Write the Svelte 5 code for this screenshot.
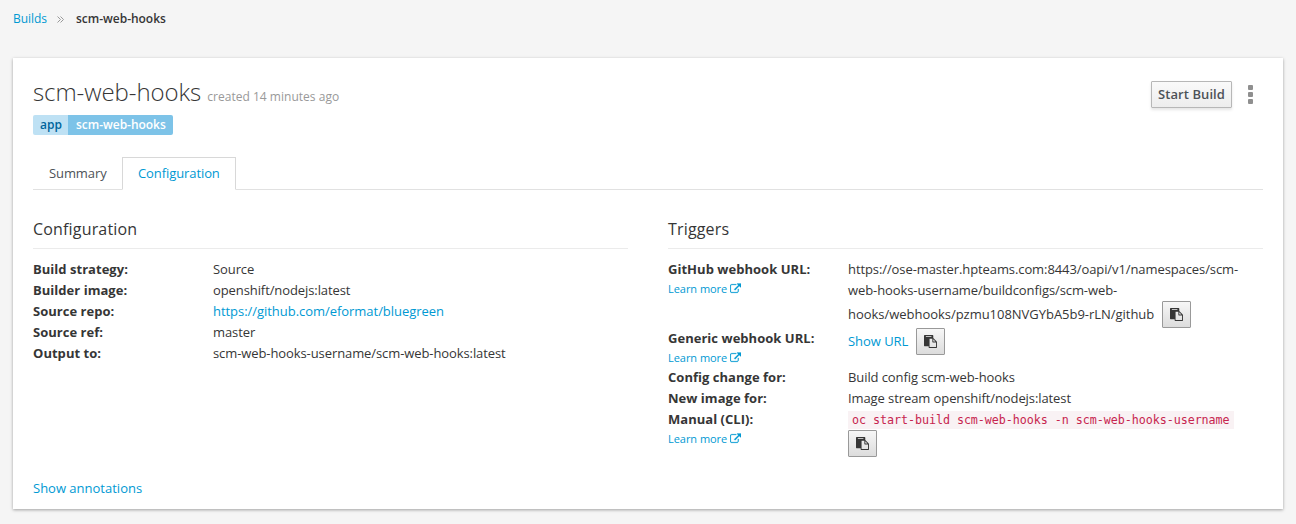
<script>
  const config = [
    ['Build strategy:', 'Source', false],
    ['Builder image:', 'openshift/nodejs:latest', false],
    ['Source repo:', 'https://github.com/eformat/bluegreen', true],
    ['Source ref:', 'master', false],
    ['Output to:', 'scm-web-hooks-username/scm-web-hooks:latest', false]
  ];
</script>

{#snippet learn()}
  <a class="learn" href="#top">Learn more
    <svg width="11" height="11" viewBox="0 0 1792 1664"><path fill="currentColor" stroke="currentColor" stroke-width="40" d="M1408 928v320q0 119-84.5 203.5t-203.5 84.5h-832q-119 0-203.5-84.5t-84.5-203.5v-832q0-119 84.5-203.5t203.5-84.5h704q14 0 23 9t9 23v64q0 14-9 23t-23 9h-704q-66 0-113 47t-47 113v832q0 66 47 113t113 47h832q66 0 113-47t47-113v-320q0-14 9-23t23-9h64q14 0 23 9t9 23zm384-864v512q0 26-19 45t-45 19-45-19l-176-176-652 652q-10 10-23 10t-23-10l-114-114q-10-10-10-23t10-23l652-652-176-176q-19-19-19-45t19-45 45-19h512q26 0 45 19t19 45z"/></svg>
  </a>
{/snippet}

{#snippet copy()}
  <button class="copy" aria-label="Copy">
    <svg width="13" height="13" viewBox="0 0 1792 1792"><path fill="currentColor" d="M768 1664h896v-640h-416q-40 0-68-28t-28-68v-416h-384v1152zm256-1440v-64q0-13-9.5-22.5t-22.5-9.5h-704q-13 0-22.5 9.5t-9.5 22.5v64q0 13 9.5 22.5t22.5 9.5h704q13 0 22.5-9.5t9.5-22.5zm256 672h299l-299-299v299zm512 128v672q0 40-28 68t-68 28h-960q-40 0-68-28t-28-68v-160h-544q-40 0-68-28t-28-68v-1344q0-40 28-68t68-28h1088q40 0 68 28t28 68v328q21 13 36 28l408 408q28 28 48 76t20 88z"/></svg>
  </button>
{/snippet}

<div class="page">
  <nav class="crumbs">
    <a href="#top">Builds</a>
    <svg width="7" height="7" viewBox="0 0 7 7" fill="none" stroke="#999"><path d="M.5.5l3 3-3 3M3.5.5l3 3-3 3"/></svg>
    <strong>scm-web-hooks</strong>
  </nav>
  <main class="card">
    <header>
      <h1>scm-web-hooks <small>created 14 minutes ago</small></h1>
      <div class="actions">
        <button class="start">Start Build</button>
        <svg width="5" height="19" viewBox="0 0 5 19" fill="#8f8f8f"><rect width="5" height="5" rx="1"/><rect y="7" width="5" height="5" rx="1"/><rect y="14" width="5" height="5" rx="1"/></svg>
      </div>
    </header>
    <div class="label"><span class="key">app</span><span class="val">scm-web-hooks</span></div>
    <div class="tabs"><span class="tab">Summary</span><span class="tab active">Configuration</span></div>
    <div class="cols">
      <section>
        <h2>Configuration</h2>
        <dl>
          {#each config as [name, value, link]}
            <div class="row">
              <dt>{name}</dt>
              <dd>{#if link}<a href="#top">{value}</a>{:else}{value}{/if}</dd>
            </div>
          {/each}
        </dl>
      </section>
      <section>
        <h2>Triggers</h2>
        <dl>
          <div class="row">
            <dt>GitHub webhook URL:{@render learn()}</dt>
            <dd>
              <div>https://ose-master.hpteams.com:8443/oapi/v1/namespaces/scm-</div>
              <div>web-hooks-username/buildconfigs/scm-web-</div>
              <div class="line">hooks/webhooks/pzmu108NVGYbA5b9-rLN/github{@render copy()}</div>
            </dd>
          </div>
          <div class="row generic">
            <dt>Generic webhook URL:{@render learn()}</dt>
            <dd><div class="line"><a href="#top">Show URL</a>{@render copy()}</div></dd>
          </div>
          <div class="row"><dt>Config change for:</dt><dd>Build config scm-web-hooks</dd></div>
          <div class="row"><dt>New image for:</dt><dd>Image stream openshift/nodejs:latest</dd></div>
          <div class="row">
            <dt>Manual (CLI):{@render learn()}</dt>
            <dd class="cli"><code>oc start-build scm-web-hooks -n scm-web-hooks-username</code>{@render copy()}</dd>
          </div>
        </dl>
      </section>
    </div>
    <a class="annotations" href="#top">Show annotations</a>
  </main>
</div>

<style>
  :global(body) { background: #f5f5f5; }
  .page {
    box-sizing: border-box;
    height: 524px;
    padding: 0 13px 15px;
    display: flex;
    flex-direction: column;
    font: 13px/21px "Open Sans", sans-serif;
    color: #363636;
    overflow: hidden;
  }
  a { color: #0099d3; text-decoration: none; }
  svg { display: block; flex: none; }
  .crumbs { display: flex; align-items: center; height: 37px; margin-bottom: 21px; font-size: 12px; letter-spacing: -.03px; }
  .crumbs svg { margin: 2px 12px 0 10px; }
  .crumbs strong { font-weight: 600; }
  .card {
    flex: 1;
    box-sizing: border-box;
    display: flex;
    flex-direction: column;
    padding: 20px 20px 10px;
    background: #fff;
    box-shadow: 0 1px 3px rgba(0, 0, 0, .35);
  }
  header { display: flex; justify-content: space-between; height: 37px; }
  h1 { margin: 0; font-size: 24px; line-height: 28px; font-weight: 300; letter-spacing: -.08px; white-space: nowrap; }
  small { font-size: 12px; font-weight: 400; color: #999; letter-spacing: .02px; }
  .actions { display: flex; align-items: flex-start; gap: 16px; padding: 3px 10px 0 0; }
  .actions svg { margin-top: 4px; }
  button { box-sizing: border-box; font-family: inherit; padding: 0; color: #363636; }
  .start {
    width: 81px;
    height: 27px;
    border: 1px solid #b7b7b7;
    border-radius: 1px;
    background: linear-gradient(#fafafa, #ededed);
    box-shadow: 0 2px 3px rgba(3, 3, 3, .1);
    color: #4d5258;
    font-size: 13px;
    line-height: 24px;
    padding-bottom: 1px;
    letter-spacing: .08px;
    font-weight: 600;
  }
  .label { display: flex; height: 20px; font-size: 12px; line-height: 20px; font-weight: 600; }
  .key { box-sizing: border-box; width: 35px; padding: 0 7px; background: #bee1f4; color: #00659c; border-radius: 2px 0 0 2px; }
  .val { box-sizing: border-box; width: 105px; padding: 0 7px 0 8px; background: #7dc3e8; color: #fff; border-radius: 0 2px 2px 0; letter-spacing: -.03px; }
  .tabs { display: flex; height: 33px; margin-top: 22px; box-sizing: border-box; border-bottom: 1px solid #e1e1e1; }
  .tab { box-sizing: border-box; width: 89px; height: 33px; padding: 5px 15px 0; border: 1px solid transparent; color: #4d5258; letter-spacing: -.09px; }
  .active { width: 114px; border-color: #d8d8d8 #d8d8d8 #fff; background: #fff; color: #0099d3; }
  .cols { display: grid; grid-template-columns: 1fr 1fr; gap: 40px; flex: 1; padding-top: 29px; }
  h2 { margin: 0 0 10px; height: 29px; border-bottom: 1px solid #ebebeb; font-size: 16px; line-height: 20px; font-weight: 400; letter-spacing: .17px; }
  dl, dd { margin: 0; }
  dd { letter-spacing: -.09px; }
  dd a { letter-spacing: -.04px; }
  .row { display: grid; grid-template-columns: 180px 1fr; min-height: 21px; white-space: nowrap; }
  .generic { height: 39px; }
  dt { font-weight: 700; letter-spacing: .03px; }
  .learn { display: flex; align-items: center; gap: 3px; height: 18px; margin-top: -1px; font-size: 11px; font-weight: 400; letter-spacing: -.04px; }
  .line { display: flex; align-items: center; gap: 8px; height: 27px; letter-spacing: -.03px; }
  .copy {
    display: flex;
    align-items: center;
    justify-content: center;
    flex: none;
    width: 29px;
    height: 27px;
    border: 1px solid #999;
    border-radius: 1px;
    background: linear-gradient(#f7f7f7, #dcdcdc);
  }
  .copy svg { margin-top: -1px; }
  .cli { display: flex; flex-direction: column; align-items: flex-start; gap: 1px; padding-top: 2px; }
  code {
    height: 18px;
    padding: 0 4px;
    background: #f9f2f4;
    color: #c7254e;
    font: 11.7px/18px "DejaVu Sans Mono", monospace;
    letter-spacing: -.044px;
  }
  .annotations { align-self: flex-start; }
</style>
